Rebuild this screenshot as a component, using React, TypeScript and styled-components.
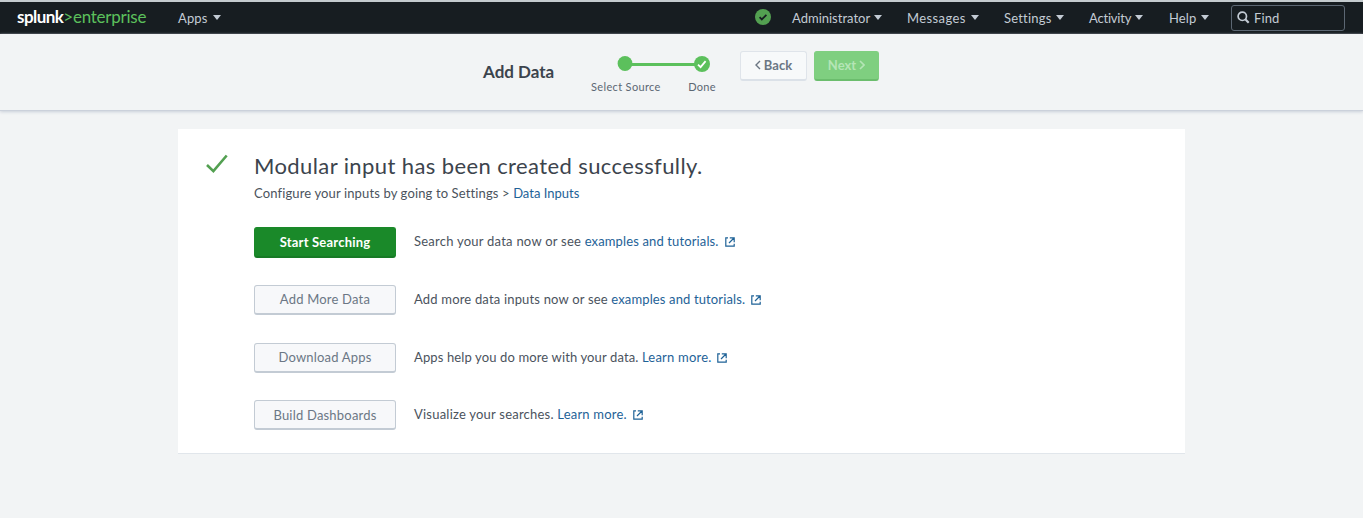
import React from 'react';
import styled, { createGlobalStyle } from 'styled-components';

const GlobalStyle = createGlobalStyle`
  * { box-sizing: border-box; }
  body {
    margin: 0;
    background: #f2f4f5;
    color: #3c444d;
    font-family: Lato, "Liberation Sans", sans-serif;
    font-size: 13px;
    overflow: hidden;
  }
  a { color: #1e6297; text-decoration: none; }
`;

const Page = styled.div`
  display: flex;
  flex-direction: column;
  height: 518px;
`;

const NavBar = styled.nav`
  display: flex;
  align-items: center;
  height: 34px;
  padding: 1px 18px 0 17px;
  border-top: 2px solid #c4cbce;
  border-bottom: 1px solid #23282e;
  background: #171d21;
  color: #c3cbd4;
`;

const Logo = styled.div`
  display: flex;
  align-items: baseline;
  width: 161px;
  padding-bottom: 2px;
  font-size: 17px;
  line-height: 20px;
  white-space: nowrap;
`;

const Brand = styled.span`
  color: #fff;
  font-weight: 700;
  letter-spacing: -0.55px;
`;

const Product = styled.span`
  color: #5cc05c;
  letter-spacing: -0.25px;
`;

const MenuItem = styled.div<{ $width: number }>`
  display: flex;
  align-items: center;
  flex: none;
  width: ${p => p.$width}px;
  line-height: 20px;
`;

const MenuLabel = styled.span<{ $width: number; $spacing?: number }>`
  width: ${p => p.$width}px;
  margin-right: 4px;
  letter-spacing: ${p => p.$spacing ?? 0.1}px;
  white-space: nowrap;
`;

const Caret = styled.i`
  margin-bottom: 1px;
  border: 4px solid transparent;
  border-top: 5px solid #c3cbd4;
  border-bottom: 0;
`;

const Health = styled.div`
  display: flex;
  width: 37px;
  margin-left: auto;
  padding-bottom: 3px;
`;

const FindBox = styled.div`
  display: flex;
  align-items: center;
  gap: 4px;
  width: 114px;
  height: 26px;
  padding: 0 0 1px 5px;
  border: 1px solid #5c6773;
  border-radius: 3px;
  letter-spacing: 0.1px;
`;

const Header = styled.header`
  display: flex;
  align-items: flex-start;
  flex: none;
  height: 77px;
  padding-left: 483px;
  border-bottom: 1px solid #cbd1db;
  box-shadow: 0 1px 3px #c9cfd9;
`;

const Title = styled.h1`
  width: 108px;
  margin: 27px 0 0;
  font-size: 17px;
  font-weight: 700;
  line-height: 22px;
  letter-spacing: 0;
`;

const Wizard = styled.div`
  width: 125px;
  margin: 21px 24px 0 0;
`;

const Track = styled.svg`
  display: block;
  margin-left: 26px;
`;

const Steps = styled.div`
  display: flex;
  justify-content: space-between;
  margin-top: 7px;
  font-size: 11px;
  line-height: 14px;
  letter-spacing: 0.35px;
  white-space: nowrap;
  color: #5c6773;
`;

const WizardButton = styled.button<{ $primary?: boolean }>`
  display: flex;
  align-items: center;
  justify-content: center;
  gap: 3px;
  width: ${p => (p.$primary ? 65 : 67)}px;
  height: 30px;
  margin: 17px 7px 0 0;
  padding: 0 0 1px;
  border: 1px solid ${p => (p.$primary ? '#7fcf80' : '#dfe4ea')};
  border-bottom: 2px solid ${p => (p.$primary ? '#6bbd6d' : '#dbe1e8')};
  border-radius: 3px;
  background: ${p => (p.$primary ? '#7fcf80' : '#f7f9fa')};
  color: ${p => (p.$primary ? '#b5e5b6' : '#6b7683')};
  font: 700 13px Lato, sans-serif;
`;

const Card = styled.main`
  display: flex;
  width: 1007px;
  height: 325px;
  margin: 18px 0 0 178px;
  padding: 25px 28px 0;
  border-bottom: 1px solid #e1e6eb;
  background: #fff;
`;

const CheckIcon = styled.svg`
  flex: none;
  margin-right: 26px;
`;

const Heading = styled.h2`
  margin: 0;
  font-size: 22px;
  font-weight: 400;
  line-height: 23px;
  letter-spacing: 0.4px;
  white-space: nowrap;
`;

const Intro = styled.p`
  margin: 7px 0 25px;
  color: #4b535d;
  line-height: 18px;
  letter-spacing: 0.13px;
  a { letter-spacing: 0; }
`;

const ActionRow = styled.div`
  display: flex;
  align-items: flex-start;
  height: 31px;
  margin-bottom: 26.75px;
`;

const ActionButton = styled.button<{ $primary?: boolean }>`
  width: 142px;
  height: ${p => (p.$primary ? 31 : 30)}px;
  margin-right: 18px;
  padding: 0;
  border: 1px solid ${p => (p.$primary ? '#1a8929' : '#c3cbd4')};
  border-bottom: 2px solid ${p => (p.$primary ? '#177a25' : '#c3cbd4')};
  border-radius: 3px;
  background: ${p => (p.$primary ? '#1a8929' : '#f7f8fa')};
  color: ${p => (p.$primary ? '#fff' : '#6b7785')};
  font: ${p => (p.$primary ? 700 : 400)} 13px Lato, sans-serif;
  letter-spacing: 0.2px;
`;

const ActionText = styled.span<{ $spacing: number; $linkSpacing: number }>`
  color: #4b535d;
  line-height: 29px;
  letter-spacing: ${p => p.$spacing}px;
  white-space: nowrap;
  a { letter-spacing: ${p => p.$linkSpacing}px; }
`;

const ExternalSvg = styled.svg`
  margin-left: 6px;
  vertical-align: -1px;
`;

const External = () => (
  <ExternalSvg width="10" height="10" viewBox="0 0 10 10" fill="none" stroke="#1e6297" strokeWidth="1.2">
    <path d="M3 .8H.8v8.4h8.4V6.8M4.8 .8h4.4v4.4M9 1 4 6" />
  </ExternalSvg>
);

const menus = [
  { label: 'Administrator', width: 115, text: 78, spacing: 0 },
  { label: 'Messages', width: 97, text: 60, spacing: 0.4 },
  { label: 'Settings', width: 85, text: 48, spacing: 0.2 },
  { label: 'Activity', width: 80, text: 42, spacing: -0.2 },
  { label: 'Help', width: 62, text: 28, spacing: 0.1 },
];

const actions = [
  { button: 'Start Searching', text: 'Search your data now or see ', link: 'examples and tutorials.', spacing: 0.24, linkSpacing: 0.13 },
  { button: 'Add More Data', text: 'Add more data inputs now or see ', link: 'examples and tutorials.', spacing: 0.18, linkSpacing: 0.13 },
  { button: 'Download Apps', text: 'Apps help you do more with your data. ', link: 'Learn more.', spacing: 0.13, linkSpacing: 0.2 },
  { button: 'Build Dashboards', text: 'Visualize your searches. ', link: 'Learn more.', spacing: 0.22, linkSpacing: 0.2 },
];

export default function App() {
  return (
    <Page>
      <GlobalStyle />
      <NavBar>
        <Logo><Brand>splunk</Brand><Product>&gt;enterprise</Product></Logo>
        <MenuItem $width={60}><MenuLabel $width={31}>Apps</MenuLabel><Caret /></MenuItem>
        <Health>
          <svg width="16" height="16" viewBox="0 0 16 16">
            <circle cx="8" cy="8" r="8" fill="#53a051" />
            <path d="m4.6 8.2 2.2 2.2 4.6-4.6" fill="none" stroke="#171d21" strokeWidth="1.8" />
          </svg>
        </Health>
        {menus.map(m => (
          <MenuItem key={m.label} $width={m.width}>
            <MenuLabel $width={m.text} $spacing={m.spacing}>{m.label}</MenuLabel><Caret />
          </MenuItem>
        ))}
        <FindBox>
          <svg width="13" height="13" viewBox="0 0 13 13" fill="none" stroke="#c3cbd4">
            <circle cx="5.3" cy="5.3" r="4.2" strokeWidth="1.7" />
            <path d="m8.3 8.3 3.4 3.4" strokeWidth="2.2" />
          </svg>
          Find
        </FindBox>
      </NavBar>
      <Header>
        <Title>Add Data</Title>
        <Wizard>
          <Track width="94" height="18" viewBox="0 0 94 18">
            <path d="M8 9.5h77" stroke="#5cc05c" strokeWidth="3" />
            <circle cx="8" cy="8.5" r="7.4" fill="#5cc05c" />
            <circle cx="85" cy="9" r="8" fill="#5cc05c" />
            <path d="m81 9.6 2.6 2.6 5-6" fill="none" stroke="#fff" strokeWidth="1.8" />
          </Track>
          <Steps><span>Select Source</span><span>Done</span></Steps>
        </Wizard>
        <WizardButton>
          <svg width="6" height="10" viewBox="0 0 6 10" fill="none" stroke="currentColor" strokeWidth="1.4"><path d="M5 1 1 5l4 4" /></svg>
          Back
        </WizardButton>
        <WizardButton $primary>
          Next
          <svg width="6" height="10" viewBox="0 0 6 10" fill="none" stroke="currentColor" strokeWidth="1.6"><path d="m1 1 4 4-4 4" /></svg>
        </WizardButton>
      </Header>
      <Card>
        <CheckIcon width="22" height="20" viewBox="0 0 22 20">
          <path d="m1 11 6.4 6.2L20.7 1.5" fill="none" stroke="#53a051" strokeWidth="2.6" />
        </CheckIcon>
        <div>
          <Heading>Modular input has been created successfully.</Heading>
          <Intro>Configure your inputs by going to Settings &gt; <a href="#inputs">Data Inputs</a></Intro>
          {actions.map((a, i) => (
            <ActionRow key={a.button}>
              <ActionButton $primary={i === 0}>{a.button}</ActionButton>
              <ActionText $spacing={a.spacing} $linkSpacing={a.linkSpacing}>{a.text}<a href="#more">{a.link}<External /></a></ActionText>
            </ActionRow>
          ))}
        </div>
      </Card>
    </Page>
  );
}
